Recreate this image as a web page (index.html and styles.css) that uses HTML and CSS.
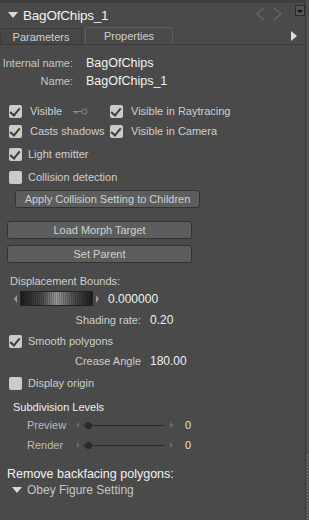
FILE: index.html
```html
<!DOCTYPE html>
<html lang="en">

<head>
    <meta charset="UTF-8">
    <link rel="stylesheet" href="styles.css">
    <title>Properties</title>
</head>

<body>
    <div class="panel">
        <div class="header">
            <span class="tri-down big"></span>
            <span class="title">BagOfChips_1</span>
            <svg class="nav" width="26" height="14" viewBox="0 0 26 14">
                <path d="M8 1L1 7L8 13M18 1L25 7L18 13" stroke="#686868" stroke-width="1.3" fill="none" />
            </svg>
            <span class="menu-btn"><span class="tri-down tiny"></span></span>
        </div>
        <div class="tabs">
            <div class="tab">Parameters</div>
            <div class="tab active">Properties</div>
            <span class="tri-right"></span>
        </div>

        <div class="content">
            <div class="name-row">
                <span class="name-label">Internal name:</span>
                <span class="name-value">BagOfChips</span>
            </div>
            <div class="name-row">
                <span class="name-label">Name:</span>
                <span class="name-value">BagOfChips_1</span>
            </div>

            <div class="check-grid">
                <label class="check col1"><span class="box on"></span>Visible
                    <svg class="key" width="16" height="7" viewBox="0 0 16 7">
                        <path d="M1 3.5H10M3 3.5V6M5 3.5V6" stroke="#8a8a8a" stroke-width="1" fill="none" />
                        <circle cx="12.5" cy="3.5" r="2.5" stroke="#8a8a8a" stroke-width="1" fill="none" />
                    </svg>
                </label>
                <label class="check"><span class="box on"></span>Visible in Raytracing</label>
                <label class="check col1"><span class="box on"></span>Casts shadows</label>
                <label class="check"><span class="box on"></span>Visible in Camera</label>
            </div>
            <label class="check single"><span class="box on"></span>Light emitter</label>
            <label class="check single"><span class="box"></span>Collision detection</label>

            <button class="btn btn-apply">Apply Collision Setting to Children</button>
            <button class="btn btn-wide first">Load Morph Target</button>
            <button class="btn btn-wide">Set Parent</button>

            <div class="section-label">Displacement Bounds:</div>
            <div class="bounds">
                <span class="arr-left"></span>
                <span class="grad"></span>
                <span class="arr-right"></span>
                <span class="value">0.000000</span>
            </div>
            <div class="field-row shading">
                <span class="field-label">Shading rate:</span>
                <span class="value">0.20</span>
            </div>
            <label class="check single smooth"><span class="box on"></span>Smooth polygons</label>
            <div class="field-row crease">
                <span class="field-label">Crease Angle</span>
                <span class="value">180.00</span>
            </div>
            <label class="check single origin"><span class="box"></span>Display origin</label>

            <div class="subdiv">Subdivision Levels</div>
            <div class="sliders">
                <div class="slider-row">
                    <span class="slider-label">Preview</span>
                    <span class="arr-left small"></span>
                    <span class="track"><span class="knob"></span></span>
                    <span class="arr-right small"></span>
                    <span class="slider-value">0</span>
                </div>
                <div class="slider-row">
                    <span class="slider-label">Render</span>
                    <span class="arr-left small"></span>
                    <span class="track"><span class="knob"></span></span>
                    <span class="arr-right small"></span>
                    <span class="slider-value">0</span>
                </div>
            </div>

            <div class="backface">Remove backfacing polygons:</div>
            <div class="dropdown"><span class="tri-down mid"></span>Obey Figure Setting</div>
        </div>
    </div>
    <div class="edge"><span class="grip"></span></div>
</body>

</html>
```

FILE: styles.css
```css
body {
    margin: 0;
    width: 309px;
    height: 520px;
    display: flex;
    background-color: #4a4a4a;
    font-family: 'Liberation Sans', Arial, sans-serif;
    color: #cfcfcf;
    overflow: hidden;
}

.panel {
    width: 305px;
    border-right: 1px solid #3a3a3a;
    display: flex;
    flex-direction: column;
}

.edge {
    flex: 1;
    background-color: #505050;
    display: flex;
    flex-direction: column;
    justify-content: flex-end;
}

.grip {
    height: 65px;
    margin-left: 1px;
    width: 1px;
    background: repeating-linear-gradient(#8a8a8a 0 1px, transparent 1px 3px);
}

/* header */
.header {
    height: 27px;
    display: flex;
    align-items: center;
    border-top: 3px solid #404040;
    box-sizing: border-box;
}

.tri-down {
    width: 0;
    height: 0;
    border-left: 5px solid transparent;
    border-right: 5px solid transparent;
    border-top: 6px solid #d8d8d8;
}

.tri-down.big {
    margin-left: 8px;
    margin-right: 5px;
}

.title {
    color: #f2f2f2;
    font-size: 13.5px;
    letter-spacing: -0.2px;
}

.nav {
    margin-left: auto;
    margin-right: 13px;
    margin-top: -3px;
}

.menu-btn {
    width: 10px;
    height: 11px;
    border: 1px solid #2c2c2c;
    background-color: #555;
    display: flex;
    justify-content: center;
    padding-top: 4px;
    box-sizing: border-box;
    margin-top: -9px;
}

.tri-down.tiny {
    border-left-width: 3px;
    border-right-width: 3px;
    border-top: 3px solid #111;
}

/* tabs */
.tabs {
    height: 17px;
    display: flex;
    align-items: flex-end;
    border-bottom: 1px solid #393939;
}

.tab {
    height: 16px;
    font-size: 11px;
    color: #cfcfcf;
    border: 1px solid #3c3c3c;
    border-bottom: none;
    border-radius: 2px 2px 0 0;
    box-sizing: border-box;
    padding-top: 2px;
    text-align: center;
    width: 82px;
    background-color: #474747;
}

.tab.active {
    width: 88px;
    margin-left: 3px;
    border-color: #5e5e5e;
    background-color: #4a4a4a;
    height: 17px;
}

.tri-right {
    margin-left: auto;
    margin-right: 8px;
    align-self: center;
    width: 0;
    height: 0;
    border-top: 5px solid transparent;
    border-bottom: 5px solid transparent;
    border-left: 6px solid #e0e0e0;
}

/* content */
.content {
    padding-top: 11px;
    font-size: 11px;
}

.name-row {
    display: flex;
    align-items: baseline;
    height: 18px;
}

.name-label {
    width: 73px;
    text-align: right;
    color: #c6c6c6;
}

.name-value {
    margin-left: 13px;
    color: #f2f2f2;
    font-size: 12.5px;
}

.check-grid {
    margin-top: 12px;
    display: grid;
    grid-template-columns: 101px auto;
    row-gap: 6px;
    margin-left: 9px;
}

.check {
    display: flex;
    align-items: center;
    height: 14px;
    white-space: nowrap;
}

.box {
    width: 13px;
    height: 13px;
    border-radius: 2px;
    background-color: #cbcbcb;
    margin-right: 8px;
    position: relative;
    flex: none;
}

.box.on::after {
    content: "";
    position: absolute;
    left: 3px;
    top: 1px;
    width: 4px;
    height: 8px;
    border-right: 2px solid #3d3d3d;
    border-bottom: 2px solid #3d3d3d;
    transform: rotate(40deg);
}

.key {
    margin-left: 10px;
}

.check.single {
    margin-left: 9px;
    margin-top: 9px;
}

.check.single .box {
    margin-right: 6px;
}

.btn {
    display: block;
    font-family: inherit;
    font-size: 11px;
    color: #d0d0d0;
    background-color: #5d5d5d;
    border: 1px solid #333;
    border-radius: 3px;
    height: 18px;
    padding: 0;
}

.btn-apply {
    margin: 6px 0 0 15px;
    width: 185px;
}

.btn-wide {
    margin: 6px 0 0 7px;
    width: 185px;
}

.btn-wide.first {
    margin-top: 13px;
}

.section-label {
    margin: 12px 0 0 10px;
}

.bounds {
    display: flex;
    align-items: center;
    margin: 4px 0 0 14px;
    height: 15px;
}

.arr-left,
.arr-right {
    width: 0;
    height: 0;
    border-top: 4px solid transparent;
    border-bottom: 4px solid transparent;
}

.arr-left {
    border-right: 3px solid #9a9a9a;
}

.arr-right {
    border-left: 3px solid #9a9a9a;
}

.grad {
    width: 71px;
    height: 13px;
    margin: 0 3px;
    border: 1px solid #222;
    background:
        repeating-linear-gradient(90deg, rgba(0, 0, 0, 0.18) 0 1px, transparent 1px 2px),
        linear-gradient(90deg, #1e1e1e, #4a4a4a 30%, #9a9a9a 50%, #4a4a4a 75%, #1e1e1e);
}

.value {
    color: #f0f0f0;
    font-size: 12px;
}

.bounds .value {
    margin-left: 9px;
}

.field-row {
    display: flex;
    align-items: baseline;
    margin-top: 7px;
}

.field-label {
    width: 141px;
    text-align: right;
    margin-right: 9px;
}

.check.single.smooth {
    margin-top: 7px;
}

.field-row.crease {
    margin-top: 6px;
}

.check.single.origin {
    margin-top: 8px;
}

.subdiv {
    margin: 11px 0 0 13px;
    color: #f0f0f0;
}

.sliders {
    margin-top: 2px;
}

.slider-row {
    display: flex;
    align-items: center;
    height: 20px;
    margin-left: 27px;
}

.slider-label {
    width: 49px;
    color: #bcbcbc;
}

.arr-left.small,
.arr-right.small {
    border-top-width: 3px;
    border-bottom-width: 3px;
}

.arr-left.small {
    border-right-color: #6c6c6c;
}

.arr-right.small {
    border-left-color: #6c6c6c;
}

.track {
    width: 82px;
    height: 1px;
    background-color: #2a2a2a;
    margin: 0 5px 0 4px;
    position: relative;
}

.knob {
    position: absolute;
    left: 2px;
    top: -3px;
    width: 7px;
    height: 7px;
    border-radius: 50%;
    background-color: #2a2a2a;
}

.slider-value {
    margin-left: 12px;
    color: #e0e0e0;
}

.backface {
    margin: 12px 0 0 7px;
    font-size: 12.5px;
    color: #f2f2f2;
}

.dropdown {
    display: flex;
    align-items: center;
    margin: 2px 0 0 12px;
    font-size: 12px;
    color: #c6c6c6;
}

.tri-down.mid {
    margin-right: 5px;
}
```
